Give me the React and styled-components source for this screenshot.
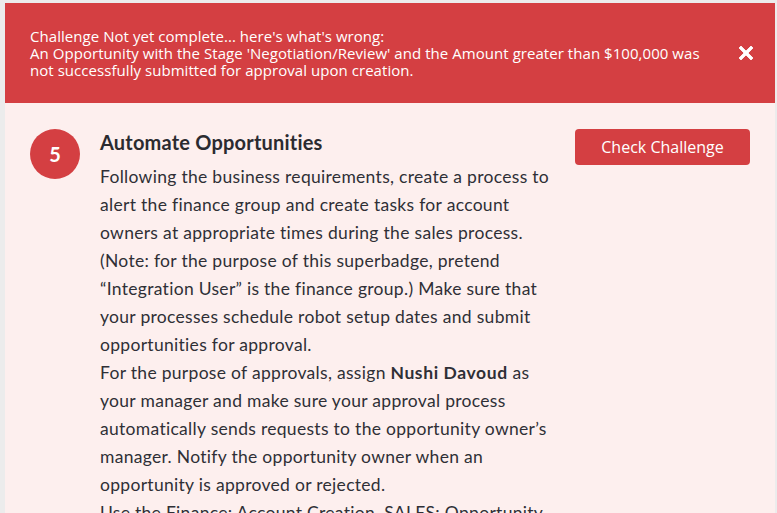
import React from 'react';
import styled, { createGlobalStyle } from 'styled-components';

const GlobalStyle = createGlobalStyle`
    html, body {
        margin: 0;
        padding: 0;
        background: #ececec;
        overflow: hidden;
    }
`;

const Frame = styled.div`
    margin: 3px 2px 0 5px;
    height: 510px;
    background: #fdefee;
    overflow: hidden;
`;

const Banner = styled.div`
    height: 100px;
    padding: 0 21px 0 25px;
    background: #d43f42;
    color: #ffffff;
    display: flex;
    align-items: center;
    justify-content: space-between;
    font-family: 'Open Sans', sans-serif;
    font-size: 15px;
    line-height: 17px;
    letter-spacing: 0.05px;
`;

const BannerText = styled.div`
    padding-top: 1px;
`;

const CloseButton = styled.button`
    border: none;
    background: none;
    padding: 0;
    width: 16px;
    height: 16px;
    display: flex;
    cursor: pointer;
`;

const Body = styled.div`
    display: flex;
    align-items: flex-start;
    padding: 26px 25px 0 25px;
    font-family: 'Lato', sans-serif;
    color: #2f2f36;
`;

const StepBadge = styled.div`
    flex: 0 0 50px;
    height: 50px;
    border-radius: 50%;
    background: #d43f42;
    color: #ffffff;
    display: flex;
    align-items: center;
    justify-content: center;
    font-family: 'Lato', sans-serif;
    font-weight: 700;
    font-size: 20px;
`;

const Content = styled.div`
    flex: 1;
    margin-left: 20px;
`;

const Title = styled.h2`
    margin: 0 0 8px 0;
    font-size: 20px;
    line-height: 26px;
    font-weight: 700;
    letter-spacing: 0.2px;
    color: #2b2b30;
`;

const Paragraph = styled.p`
    margin: 0;
    font-size: 17.5px;
    line-height: 28px;
    letter-spacing: 0.3px;

    strong {
        letter-spacing: 0.6px;
    }
`;

const Line = styled.span`
    display: block;
    white-space: nowrap;
`;

const CheckButton = styled.button`
    flex: 0 0 175px;
    height: 36px;
    border: none;
    border-radius: 4px;
    background: #d43f42;
    color: #ffffff;
    font-family: 'Open Sans', sans-serif;
    font-size: 16px;
    cursor: pointer;
`;

const intro = [
    'Following the business requirements, create a process to',
    'alert the finance group and create tasks for account',
    'owners at appropriate times during the sales process.',
    '(Note: for the purpose of this superbadge, pretend',
    '\u201CIntegration User\u201D is the finance group.) Make sure that',
    'your processes schedule robot setup dates and submit',
    'opportunities for approval.',
];

const approvals = [
    'your manager and make sure your approval process',
    'automatically sends requests to the opportunity owner\u2019s',
    'manager. Notify the opportunity owner when an',
    'opportunity is approved or rejected.',
    'Use the Finance: Account Creation, SALES: Opportunity',
];

function CloseIcon() {
    return (
        <svg width="16" height="16" viewBox="0 0 16 16">
            <path
                d="M3 1 L8 6 L13 1 L15 3 L10 8 L15 13 L13 15 L8 10 L3 15 L1 13 L6 8 L1 3 Z"
                fill="#ffffff"
                stroke="#ffffff"
                strokeWidth="0.8"
                strokeLinejoin="round"
            />
        </svg>
    );
}

export default function App() {
    return (
        <>
            <GlobalStyle />
            <Frame>
                <Banner>
                    <BannerText>
                        Challenge Not yet complete... here's what's wrong:
                        <br />
                        An Opportunity with the Stage 'Negotiation/Review' and the Amount greater than $100,000 was
                        <br />
                        not successfully submitted for approval upon creation.
                    </BannerText>
                    <CloseButton aria-label="Close">
                        <CloseIcon />
                    </CloseButton>
                </Banner>
                <Body>
                    <StepBadge>5</StepBadge>
                    <Content>
                        <Title>Automate Opportunities</Title>
                        <Paragraph>
                            {intro.map((line) => (
                                <Line key={line}>{line}</Line>
                            ))}
                            <Line>
                                For the purpose of approvals, assign <strong>Nushi Davoud</strong> as
                            </Line>
                            {approvals.map((line) => (
                                <Line key={line}>{line}</Line>
                            ))}
                        </Paragraph>
                    </Content>
                    <CheckButton>Check Challenge</CheckButton>
                </Body>
            </Frame>
        </>
    );
}
